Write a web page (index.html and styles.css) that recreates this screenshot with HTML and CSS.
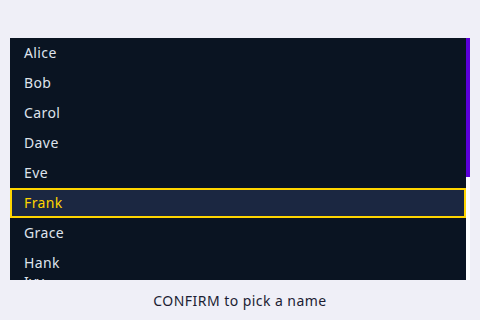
FILE: index.html
```html
<!DOCTYPE html>
<html>
<head>
<meta charset="utf-8">
<link rel="stylesheet" href="styles.css">
</head>
<body>
<div class="screen">
  <div class="listbox">
    <div class="items">
      <div class="row">Alice</div>
      <div class="row">Bob</div>
      <div class="row">Carol</div>
      <div class="row">Dave</div>
      <div class="row">Eve</div>
      <div class="row selected">Frank</div>
      <div class="row">Grace</div>
      <div class="row">Hank</div>
      <div class="row peek">Ivy</div>
    </div>
    <div class="scrollbar"><div class="thumb"></div></div>
  </div>
  <div class="hint">CONFIRM to pick a name</div>
</div>
</body>
</html>
```

FILE: styles.css
```css
html, body {
  margin: 0;
  padding: 0;
}
body {
  width: 480px;
  height: 320px;
  background: #efeff7;
  font-family: "Noto Sans", "DejaVu Sans", sans-serif;
  overflow: hidden;
}
.screen {
  display: flex;
  flex-direction: column;
  padding: 38px 10px 0 10px;
  height: 282px;
}
.listbox {
  display: flex;
  height: 242px;
  overflow: hidden;
  background: #0a1422;
}
.items {
  flex: 1;
  display: flex;
  flex-direction: column;
  overflow: hidden;
}
.row {
  flex: 0 0 30px;
  height: 30px;
  box-sizing: border-box;
  padding-left: 14px;
  line-height: 30px;
  font-size: 14px;
  letter-spacing: 0.4px;
  color: #dfe3ec;
}
.row.selected {
  background: #1b2741;
  border: 2px solid #ffd500;
  padding-left: 12px;
  line-height: 26px;
  color: #ffd500;
}
.row.peek {
  margin-top: -11px;
}
.scrollbar {
  width: 4px;
  background: #ffffff;
  display: flex;
  flex-direction: column;
}
.thumb {
  height: 139px;
  background: #5b00d9;
}
.hint {
  height: 40px;
  display: flex;
  align-items: center;
  justify-content: center;
  font-size: 14px;
  letter-spacing: 0.45px;
  color: #1c1d33;
}
```
